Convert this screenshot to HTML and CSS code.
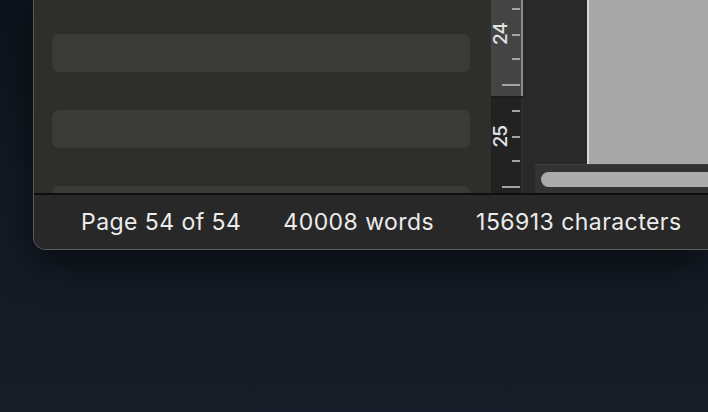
FILE: index.html
```html
<!DOCTYPE html>
<html lang="en">
<head>
    <meta charset="UTF-8">
    <title>Editor - Status</title>
    <link rel="stylesheet" href="styles.css">
</head>
<body>
    <div class="window">
        <div class="main">
            <div class="sidebar">
                <div class="card"></div>
                <div class="card"></div>
                <div class="card"></div>
            </div>
            <div class="ruler">
                <div class="ruler-seg light">
                    <span class="ruler-num">24</span>
                    <svg class="ticks" width="20" height="96" viewBox="0 0 20 96">
                        <rect x="11" y="8" width="8" height="2"/>
                        <rect x="11" y="34" width="8" height="2"/>
                        <rect x="11" y="58" width="8" height="2"/>
                        <rect x="1" y="84" width="18" height="2"/>
                    </svg>
                </div>
                <div class="ruler-seg dark">
                    <span class="ruler-num">25</span>
                    <svg class="ticks" width="20" height="95" viewBox="0 0 20 95">
                        <rect x="11" y="12" width="8" height="2"/>
                        <rect x="11" y="38" width="8" height="2"/>
                        <rect x="11" y="62" width="8" height="2"/>
                        <rect x="1" y="88" width="18" height="2"/>
                    </svg>
                </div>
            </div>
            <div class="doc-area">
                <div class="doc-top">
                    <div class="gutter"></div>
                    <div class="page"></div>
                </div>
                <div class="hscroll">
                    <div class="hscroll-thumb"></div>
                </div>
            </div>
        </div>
        <div class="statusbar">
            <span>Page 54 of 54</span>
            <span>40008 words</span>
            <span>156913 characters</span>
        </div>
    </div>
</body>
</html>
```

FILE: styles.css
```css
body {
    margin: 0;
    height: 412px;
    overflow: hidden;
    background: linear-gradient(180deg, #0d131c 0%, #131a24 45%, #171d28 100%);
    font-family: Inter, "Noto Sans", sans-serif;
}

.window {
    margin-left: 33px;
    width: 675px;
    height: 250px;
    display: flex;
    flex-direction: column;
    border-left: 1px solid #5c5c5c;
    border-bottom: 1px solid #5c5c5c;
    border-bottom-left-radius: 13px;
    overflow: hidden;
    box-shadow: 0 14px 40px rgba(0, 0, 0, 0.55);
    box-sizing: border-box;
}

.main {
    display: flex;
    height: 193px;
}

.sidebar {
    width: 457px;
    flex-shrink: 0;
    background-color: #2e2e2a;
    padding: 34px 21px 0 18px;
    box-sizing: border-box;
    display: flex;
    flex-direction: column;
    gap: 38px;
}

.card {
    height: 38px;
    flex-shrink: 0;
    background-color: #3a3a36;
    border-radius: 7px;
}

.ruler {
    width: 32px;
    flex-shrink: 0;
    display: flex;
    flex-direction: column;
    background-color: #1c1c1c;
}

.ruler-seg {
    position: relative;
    box-sizing: border-box;
}

.ruler-seg.light {
    height: 96px;
    background-color: #444444;
    border-right: 2px solid #8a8a8a;
}

.ruler-seg.dark {
    height: 95px;
    margin-top: 2px;
    background-color: #222222;
    border-right: 2px solid #2c2c2c;
}

.ruler-num {
    position: absolute;
    left: 1px;
    width: 18px;
    text-align: center;
    color: #e2e2e2;
    font-size: 19px;
    font-weight: 500;
    letter-spacing: -1px;
    line-height: 18px;
    writing-mode: vertical-rl;
    transform: rotate(180deg);
}

.light .ruler-num {
    top: 23px;
}

.dark .ruler-num {
    top: 28px;
}

.ticks {
    position: absolute;
    right: 0;
    top: 0;
    fill: #a4a4a4;
}

.doc-area {
    flex: 1;
    display: flex;
    flex-direction: column;
    background-color: #292929;
}

.doc-top {
    display: flex;
    height: 164px;
}

.gutter {
    width: 64px;
    background-color: #292929;
}

.page {
    flex: 1;
    background-color: #a8a8a8;
    border-left: 2px solid #d6d6d6;
}

.hscroll {
    flex: 1;
    margin-left: 12px;
    background-color: #333333;
    border-top: 1px solid #3c3c3c;
    padding: 7px 0 0 6px;
}

.hscroll-thumb {
    height: 15px;
    background-color: #acacac;
    border-radius: 8px 0 0 8px;
}

.statusbar {
    flex: 1;
    display: flex;
    align-items: center;
    gap: 42px;
    padding-left: 47px;
    background-color: #282828;
    border-top: 2px solid #0e0e0e;
    color: #ececec;
    font-size: 23px;
    letter-spacing: 0.45px;
    white-space: nowrap;
    overflow: hidden;
}
```
